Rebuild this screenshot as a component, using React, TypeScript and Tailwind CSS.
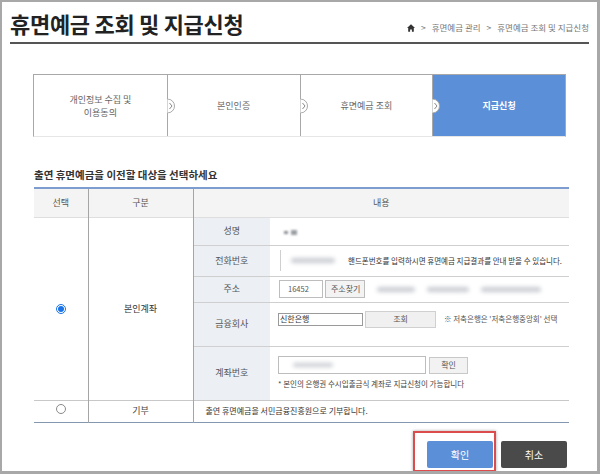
import React from 'react';

const font = "font-['Noto_Sans_CJK_KR','Noto_Sans',sans-serif]";

function Chevron() {
  return (
    <svg width="8" height="15" viewBox="0 0 8 15" className="absolute left-[-1px] top-1/2 -translate-y-1/2">
      <path d="M0.5 0.5 A7 7 0 0 1 0.5 14.5" fill="#fff" stroke="#a8a8a8" />
      <path d="M2.5 4.5 L5 7.5 L2.5 10.5" fill="none" stroke="#888" strokeWidth="1" />
    </svg>
  );
}

function Radio({ checked }: { checked?: boolean }) {
  if (checked) {
    return (
      <span className="inline-flex w-[10px] h-[10px] rounded-full border border-[#1a73e8] bg-white items-center justify-center">
        <span className="w-[6px] h-[6px] rounded-full bg-[#1a73e8]" />
      </span>
    );
  }
  return <span className="inline-block w-[10px] h-[10px] rounded-full border border-[#8a8a8a] bg-white" />;
}

function Blur({ w, h, className = '' }: { w: string; h: string; className?: string }) {
  return <span className={`inline-block ${w} ${h} bg-[#c9ccd2] blur-[2px] rounded-sm ${className}`} />;
}

const steps = ['개인정보 수집 및\n이용동의', '본인인증', '휴면예금 조회', '지급신청'];

export default function App() {
  const label = 'w-[77px] bg-[#eceff3] text-center text-[9px] text-[#555] border-l border-[#a5a5a5] font-normal';
  const rowLine = 'border-t border-[#cfcfcf]';

  return (
    <div className={`w-[600px] h-[474px] border-2 border-r-[3px] border-b-[3px] border-[#a8a8a8] bg-white overflow-hidden ${font}`}>
      {/* Header */}
      <div className="mx-[8px] h-[42px] flex items-end justify-between border-b-2 border-[#555]">
        <h1 className="text-[22px] leading-[26px] font-bold text-[#222] pb-[6px] tracking-[-0.3px]">휴면예금 조회 및 지급신청</h1>
        <div className="flex items-center gap-[6px] pb-[8px] text-[8.5px] text-[#777]">
          <svg width="8" height="8" viewBox="0 0 8 8">
            <path d="M4 0.3 L8 4 H6.8 V7.8 H4.9 V5.4 H3.1 V7.8 H1.2 V4 H0 Z" fill="#333" />
          </svg>
          <span>&gt;</span>
          <span>휴면예금 관리</span>
          <span>&gt;</span>
          <span>휴면예금 조회 및 지급신청</span>
        </div>
      </div>

      {/* Steps */}
      <div className="ml-[31px] mt-[30px] w-[533px] h-[63px] grid grid-cols-4 border border-[#a8a8a8] border-b-[#e6e6e6]">
        {steps.map((s, i) => (
          <div
            key={s}
            className={`relative flex items-center justify-center text-center whitespace-pre-line text-[9px] leading-[13px] ${
              i > 0 ? 'border-l border-[#a8a8a8]' : ''
            } ${i === 3 ? 'bg-[#5b8fd8] text-white font-bold' : 'text-[#666]'}`}
          >
            {s}
            {i > 0 && <Chevron />}
          </div>
        ))}
      </div>

      {/* Section title */}
      <p className="ml-[32px] mt-[31px] text-[10.5px] leading-[14px] font-bold text-[#333]">출연 휴면예금을 이전할 대상을 선택하세요</p>

      {/* Table */}
      <table className="ml-[32px] mt-[5px] w-[535px] table-fixed text-[9px] text-[#444]">
        <colgroup>
          <col className="w-[54px]" />
          <col className="w-[105px]" />
          <col className="w-[77px]" />
          <col />
        </colgroup>
        <thead>
          <tr className="h-[29px] bg-[#f4f4f4] border-t-2 border-[#7d9ccf]">
            <th className="font-normal text-[#555]">선택</th>
            <th className="font-normal text-[#555] border-l border-[#a5a5a5]">구분</th>
            <th colSpan={2} className="font-normal text-[#555] border-l border-[#a5a5a5]">내용</th>
          </tr>
        </thead>
        <tbody>
          <tr className="h-[28px] border-t border-[#dedede]">
            <td rowSpan={5} className="text-center align-middle">
              <Radio checked />
            </td>
            <td rowSpan={5} className="text-center align-middle border-l border-[#a5a5a5] text-[#333]">본인계좌</td>
            <td className={label}>성명</td>
            <td className="pl-[14px]">
              <span className="inline-flex gap-[3px] items-center">
                <span className="inline-block w-[4px] h-[3px] bg-[#8a8d92] blur-[1px]" />
                <span className="inline-block w-[6px] h-[5px] bg-[#9a9da2] blur-[1px]" />
              </span>
            </td>
          </tr>
          <tr className={`h-[31px] ${rowLine}`}>
            <td className={label}>전화번호</td>
            <td className="pl-[10px]">
              <div className="flex items-center gap-[6px]">
                <div className="w-[62px] h-[21px] border-l border-[#cfcfcf] flex items-center pl-[10px]">
                  <Blur w="w-[44px]" h="h-[5px]" />
                </div>
                <span className="text-[7.5px] text-[#333] whitespace-nowrap">핸드폰번호를 입력하시면 휴면예금 지급결과를 안내 받을 수 있습니다.</span>
              </div>
            </td>
          </tr>
          <tr className={`h-[26px] ${rowLine}`}>
            <td className={label}>주소</td>
            <td className="pl-[9px]">
              <div className="flex items-center gap-[2px]">
                <div className="w-[44px] h-[18px] border border-[#bdbdbd] flex items-center pl-[8px] text-[7.5px] text-[#555]">16452</div>
                <div className="w-[40px] h-[18px] border border-[#bdbdbd] bg-[#f3f3f3] flex items-center pl-[5px] text-[8px] text-[#555] whitespace-nowrap overflow-hidden">주소찾기</div>
                <div className="flex items-center gap-[12px] pl-[10px]">
                  <Blur w="w-[38px]" h="h-[5px]" />
                  <Blur w="w-[42px]" h="h-[5px]" />
                  <Blur w="w-[60px]" h="h-[5px]" />
                </div>
              </div>
            </td>
          </tr>
          <tr className={`h-[44px] ${rowLine}`}>
            <td className={label}>금융회사</td>
            <td className="pl-[8px] align-top pt-[8px]">
              <div className="flex items-center">
                <div className="w-[85px] h-[13px] border border-[#9a9a9a] flex items-center pl-[1px] text-[8px] text-[#333]">신한은행</div>
                <div className="ml-[2px] w-[71px] h-[17px] border border-[#d0d0d0] bg-[#f0f0f0] flex items-center justify-center text-[8px] text-[#555]">조회</div>
                <span className="ml-[8px] text-[7.5px] text-[#555] whitespace-nowrap">※ 저축은행은 '저축은행중앙회' 선택</span>
              </div>
            </td>
          </tr>
          <tr className={`h-[54px] ${rowLine}`}>
            <td className={label}>계좌번호</td>
            <td className="pl-[8px]">
              <div className="flex items-center">
                <div className="w-[148px] h-[18px] border border-[#bdbdbd] flex items-center pl-[14px]">
                  <Blur w="w-[40px]" h="h-[4px]" />
                </div>
                <div className="ml-[3px] w-[39px] h-[17px] border border-[#c8c8c8] bg-[#f2f2f2] flex items-center justify-center text-[8px] text-[#555]">확인</div>
              </div>
              <p className="mt-[4px] text-[7.5px] text-[#444] whitespace-nowrap">* 본인의 은행권 수시입출금식 계좌로 지급신청이 가능합니다</p>
            </td>
          </tr>
          <tr className="h-[22px] border-t border-[#c8c8c8] border-b border-b-[#8497b0]">
            <td className="text-center">
              <Radio />
            </td>
            <td className="text-center border-l border-[#a5a5a5] text-[#444]">기부</td>
            <td colSpan={2} className="pl-[12px] border-l border-[#a5a5a5] text-[8px] text-[#333]">출연 휴면예금을 서민금융진흥원으로 기부합니다.</td>
          </tr>
        </tbody>
      </table>

      {/* Buttons */}
      <div className="mt-[8px] mr-[30px] flex justify-end items-end">
        <div className="border-2 border-[#dc4c4c] pl-[12px] pt-[7px] pr-[1px] pb-[2px] shadow-[0_0_3px_rgba(0,0,0,0.35)]">
          <button className="w-[66px] h-[27px] bg-[#5b8fd8] rounded-[2px] text-white text-[10px]">확인</button>
        </div>
        <button className="ml-[5px] mb-[4px] w-[66px] h-[27px] bg-[#4a4a4a] rounded-[2px] text-white text-[10px]">취소</button>
      </div>
    </div>
  );
}
